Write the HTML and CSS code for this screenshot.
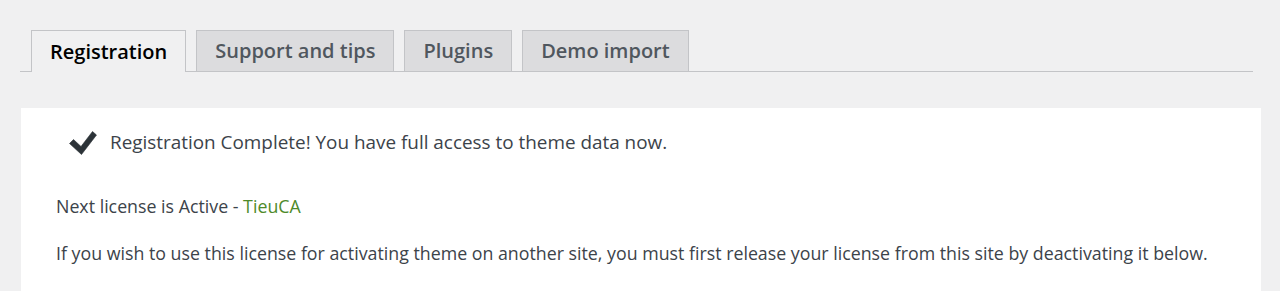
FILE: index.html
```html
<!DOCTYPE html>
<html>
<head>
<meta charset="utf-8">
<link rel="stylesheet" href="styles.css">
</head>
<body>
<div class="wrap">
  <nav class="tabs">
    <a class="tab active">Registration</a>
    <a class="tab">Support and tips</a>
    <a class="tab">Plugins</a>
    <a class="tab">Demo import</a>
  </nav>
  <div class="panel">
    <div class="notice">
      <svg class="check" viewBox="0 0 28 26" width="28" height="26"><path d="M0.5 13.5 L4.5 9.5 L12 16.5 L23.5 1.5 L27.5 5 L12.5 24.5 Z" fill="#2c3338" stroke="#2c3338" stroke-width="0.6" stroke-linejoin="round"/></svg>
      <span>Registration Complete! You have full access to theme data now.</span>
    </div>
    <p class="line">Next license is Active - <span class="name">TieuCA</span></p>
    <p class="line">If you wish to use this license for activating theme on another site, you must first release your license from this site by deactivating it below.</p>
  </div>
</div>
</body>
</html>
```
FILE: styles.css
```css
html, body {
  margin: 0;
  padding: 0;
  background: #f0f0f1;
  font-family: "Open Sans", "Noto Sans", sans-serif;
  color: #3c434a;
}
.wrap {
  padding: 30px 27px 0 20px;
}
.tabs {
  display: flex;
  gap: 10px;
  padding-left: 11px;
  border-bottom: 1px solid #c3c4c7;
  height: 41px;
}
.tab {
  display: flex;
  align-items: center;
  box-sizing: border-box;
  height: 41px;
  padding: 0 18px 1px;
  border: 1px solid #c3c4c7;
  border-bottom: none;
  background: #dcdcde;
  color: #50575e;
  font-size: 20px;
  font-weight: 600;
}
.tab.active {
  background: #f0f0f1;
  color: #000;
  height: 42px;
}
.panel {
  margin: 36px -8px 0 1px;
  background: #fff;
  padding: 18px 35px 20px;
  height: 200px;
}
.notice {
  display: flex;
  align-items: center;
  gap: 13px;
  padding-left: 13px;
  height: 32px;
  font-size: 18.9px;
}
.check {
  width: 28px;
  height: 26px;
  margin-top: 2px;
}
.line {
  font-size: 17.8px;
  line-height: 25px;
  margin: 0;
}
.notice + .line {
  margin-top: 36px;
}
.line + .line {
  margin-top: 22px;
}
.name {
  color: #4e8a2a;
}
```
